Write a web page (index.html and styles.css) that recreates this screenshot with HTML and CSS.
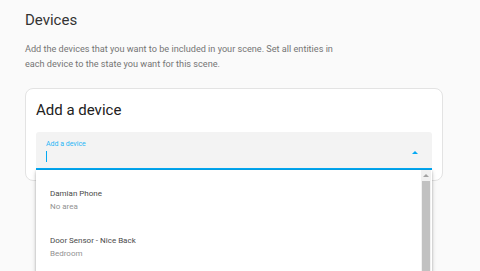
FILE: index.html
```html
<!DOCTYPE html>
<html lang="en">
<head>
  <meta charset="UTF-8">
  <title>Devices</title>
  <link rel="stylesheet" href="styles.css">
</head>
<body>
<div class="section">
  <h2 class="section-title">Devices</h2>
  <p class="section-desc">Add the devices that you want to be included in your scene. Set all entities in each device to the state you want for this scene.</p>

  <div class="card">
    <h3 class="card-title">Add a device</h3>
    <div class="picker">
      <div class="field">
        <span class="field-label">Add a device</span>
        <span class="caret"></span>
        <span class="field-arrow"></span>
      </div>
      <div class="dropdown">
        <ul class="device-list">
          <li class="device-item">
            <span class="device-name">Damian Phone</span>
            <span class="device-area">No area</span>
          </li>
          <li class="device-item">
            <span class="device-name">Door Sensor - Nice Back</span>
            <span class="device-area">Bedroom</span>
          </li>
        </ul>
        <div class="scrollbar">
          <div class="scroll-btn"></div>
          <div class="scroll-thumb"></div>
        </div>
      </div>
    </div>
  </div>
</div>
</body>
</html>
```

FILE: styles.css
```css
body {
  margin: 0;
  padding: 0;
  font-family: Roboto, 'Noto Sans', sans-serif;
  background-color: #fafafa;
  overflow: hidden;
  height: 271px;
}

.section {
  padding: 0 37px 0 25px;
}

.section-title {
  font-size: 15px;
  font-weight: 400;
  line-height: 18px;
  color: #333333;
  margin: 11px 0 0;
}

.section-desc {
  max-width: 322px;
  font-size: 9.15px;
  line-height: 15px;
  color: #757575;
  margin: 13px 0 0;
}

.card {
  margin-top: 16px;
  background: #ffffff;
  border: 1px solid #e3e3e3;
  border-radius: 8px;
  padding: 0 10px 10px;
}

.card-title {
  font-size: 15px;
  font-weight: 400;
  line-height: 18px;
  color: #212121;
  margin: 12px 0 0;
}

.picker {
  position: relative;
  margin-top: 13px;
}

.field {
  position: relative;
  height: 38px;
  box-sizing: border-box;
  background: #f3f3f3;
  border-bottom: 2px solid #03a9f4;
  border-radius: 3px 3px 0 0;
  display: flex;
  flex-direction: column;
  padding: 8px 10px 0;
}

.field-label {
  font-size: 7px;
  line-height: 9px;
  color: #29b6f6;
}

.caret {
  display: block;
  width: 1px;
  height: 11px;
  margin-top: 2px;
  background: #03a9f4;
}

.field-arrow {
  position: absolute;
  right: 14px;
  top: 19px;
  width: 0;
  height: 0;
  border-left: 3px solid transparent;
  border-right: 3px solid transparent;
  border-bottom: 3px solid #03a9f4;
}

.dropdown {
  position: absolute;
  top: 100%;
  left: 0;
  right: 0;
  height: 200px;
  background: #ffffff;
  box-shadow: 0 2px 4px rgba(0, 0, 0, 0.25), 0 0 2px rgba(0, 0, 0, 0.15);
  display: flex;
}

.device-list {
  flex: 1;
  list-style: none;
  margin: 0;
  padding: 6px 0 0;
}

.device-item {
  height: 47px;
  display: flex;
  flex-direction: column;
  justify-content: center;
  padding-left: 14px;
  font-size: 8px;
  line-height: 13px;
}

.device-name {
  color: #4a4a4a;
}

.device-area {
  color: #929292;
}

.scrollbar {
  width: 10px;
  background: #f1f1f1;
  display: flex;
  flex-direction: column;
  margin-right: 1px;
}

.scroll-btn {
  height: 10px;
  display: flex;
  justify-content: center;
  align-items: center;
}

.scroll-btn::before {
  content: "";
  border-left: 3px solid transparent;
  border-right: 3px solid transparent;
  border-bottom: 3px solid #a3a3a3;
}

.scroll-thumb {
  flex: 1;
  margin: 1px 1px 0;
  background: #c1c1c1;
}
```
